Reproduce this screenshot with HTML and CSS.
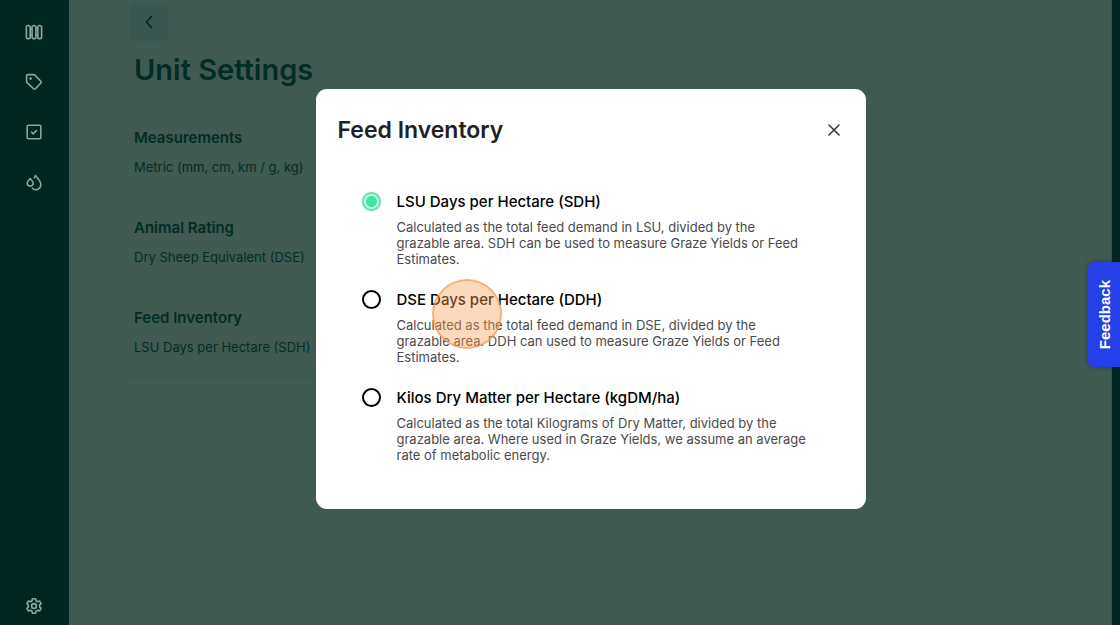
FILE: index.html
```html
<!DOCTYPE html>
<html lang="en">
<head>
<meta charset="utf-8">
<meta name="viewport" content="width=device-width, initial-scale=1">
<title>Unit Settings</title>
<link rel="stylesheet" href="styles.css">
</head>
<body>
<div class="app">
  <nav class="sidebar" aria-label="Main">
    <a class="nav-link" href="#paddocks" aria-label="Paddocks">
      <svg class="icon" viewBox="0 0 18 18"><path d="M1.4 3.4 3.3 2.4 5.2 3.4V14.6Q5.2 15.6 4.2 15.6H2.4Q1.4 15.6 1.4 14.6ZM7.1 3.4 9 2.4 10.9 3.4V14.6Q10.9 15.6 9.9 15.6H8.1Q7.1 15.6 7.1 14.6ZM12.8 3.4 14.7 2.4 16.6 3.4V14.6Q16.6 15.6 15.6 15.6H13.8Q12.8 15.6 12.8 14.6ZM5.2 5.8H7.1M5.2 12.2H7.1M10.9 5.8H12.8M10.9 12.2H12.8"/></svg>
    </a>
    <a class="nav-link" href="#tags" aria-label="Tags">
      <svg class="icon" viewBox="0 0 18 18"><path d="M1.6 2.8Q1.6 1.6 2.8 1.6H8.6Q9.3 1.6 9.8 2.1L15.9 8.2Q16.8 9.1 15.9 10L10.4 15.8Q9.5 16.7 8.6 15.8L2.1 9.6Q1.6 9.1 1.6 8.4Z"/><circle class="fill" cx="5.6" cy="5.6" r="1.3"/></svg>
    </a>
    <a class="nav-link" href="#tasks" aria-label="Tasks">
      <svg class="icon" viewBox="0 0 18 18"><rect x="2.2" y="2.2" width="13.6" height="13.6" rx="1.2"/><path d="M6.6 9.2 8.3 10.8 11.4 7.6"/></svg>
    </a>
    <a class="nav-link" href="#water" aria-label="Water">
      <svg class="icon" viewBox="0 0 18 18"><path d="M5.2 5.5C3.6 7.3 2.2 8.6 2.2 10.1A3 3 0 0 0 8.2 10.1C8.2 8.6 6.8 7.3 5.2 5.5ZM9.3 4.8 10.5 2.7C13 5.8 15.8 8.3 15.8 11.2A5 5 0 0 1 7.3 15.2"/></svg>
    </a>
    <a class="nav-link nav-link-last" href="#settings" aria-label="Settings">
      <svg class="icon" viewBox="0 0 18 18"><path d="M7.5 1.7H10.5L11 3.8 12.5 4.7 14.6 4 16.1 6.6 14.6 8.1V9.9L16.1 11.4 14.6 14 12.5 13.3 11 14.2 10.5 16.3H7.5L7 14.2 5.5 13.3 3.4 14 1.9 11.4 3.4 9.9V8.1L1.9 6.6 3.4 4 5.5 4.7 7 3.8Z"/><circle cx="9" cy="9" r="2.4"/></svg>
    </a>
  </nav>

  <main class="page">
    <button class="back" type="button" aria-label="Back">
      <svg class="back-icon" viewBox="0 0 16 16"><path d="M10.5 2.5 5.5 8 10.5 13.5"/></svg>
    </button>
    <h1 class="page-title">Unit Settings</h1>
    <section class="setting">
      <h2 class="setting-name">Measurements</h2>
      <p class="setting-value">Metric (mm, cm, km / g, kg)</p>
    </section>
    <section class="setting">
      <h2 class="setting-name">Animal Rating</h2>
      <p class="setting-value">Dry Sheep Equivalent (DSE)</p>
    </section>
    <section class="setting">
      <h2 class="setting-name">Feed Inventory</h2>
      <p class="setting-value">LSU Days per Hectare (SDH)</p>
    </section>
  </main>

  <div class="overlay">
    <form class="dialog" role="dialog" aria-labelledby="dialog-title">
      <header class="dialog-head">
        <h2 class="dialog-title" id="dialog-title">Feed Inventory</h2>
        <button class="close" type="button" aria-label="Close">
          <svg class="close-icon" viewBox="0 0 12 12"><path d="M1 1 11 11M11 1 1 11"/></svg>
        </button>
      </header>
      <div class="options">
        <div class="option">
          <input class="radio" type="radio" name="feed" id="sdh" aria-describedby="sdh-text" checked>
          <div class="option-body">
            <label class="option-name" for="sdh">LSU Days per Hectare (SDH)</label>
            <p class="option-text" id="sdh-text">Calculated as the total feed demand in LSU, divided by the grazable area. SDH can be used to measure Graze Yields or Feed Estimates.</p>
          </div>
        </div>
        <div class="option">
          <input class="radio" type="radio" name="feed" id="ddh" aria-describedby="ddh-text">
          <div class="option-body">
            <label class="option-name" for="ddh">DSE Days per Hectare (DDH)</label>
            <p class="option-text" id="ddh-text">Calculated as the total feed demand in DSE, divided by the grazable area. DDH can used to measure Graze Yields or Feed Estimates.</p>
            <span class="pointer" aria-hidden="true"></span>
          </div>
        </div>
        <div class="option">
          <input class="radio" type="radio" name="feed" id="kgdm" aria-describedby="kgdm-text">
          <div class="option-body">
            <label class="option-name" for="kgdm">Kilos Dry Matter per Hectare (kgDM/ha)</label>
            <p class="option-text" id="kgdm-text">Calculated as the total Kilograms of Dry Matter, divided by the grazable area. Where used in Graze Yields, we assume an average rate of metabolic energy.</p>
          </div>
        </div>
      </div>
    </form>
  </div>
  <button class="feedback" type="button">Feedback</button>
</div>
</body>
</html>
```
FILE: styles.css
```css
* {
  box-sizing: border-box;
}

body {
  margin: 0;
  font-family: Inter, "Liberation Sans", sans-serif;
  background: #00271f;
  color: #002e25;
}

h1, h2, p {
  margin: 0;
}

button {
  padding: 0;
  border: 0;
  font-family: inherit;
  cursor: pointer;
}

svg {
  display: block;
  fill: none;
  stroke: currentColor;
  stroke-linecap: round;
  stroke-linejoin: round;
}

.app {
  position: relative;
  display: grid;
  grid-template-columns: 69px 1fr;
  min-height: 100vh;
  padding-right: 8px;
}

.sidebar {
  display: flex;
  flex-direction: column;
  align-items: center;
  gap: 32px;
  padding: 23px 1px 10px 0;
  color: #8ba69e;
}

.nav-link {
  color: inherit;
}

.nav-link-last {
  margin-top: auto;
}

.icon {
  width: 18px;
  height: 18px;
  stroke-width: 1.6;
}

.icon .fill {
  fill: currentColor;
  stroke: none;
}

.page {
  padding: 3px 52px 24px;
  background: #405a52;
  border-right: 1px solid #365149;
}

.back {
  display: grid;
  place-items: center;
  width: 38px;
  height: 38px;
  margin-left: 9px;
  border-radius: 6px;
  background: #395650;
  color: #00271f;
}

.back-icon {
  width: 16px;
  height: 16px;
  stroke-width: 1.6;
}

.page-title {
  padding: 11px 13px;
  margin-bottom: 8px;
  font-size: 29px;
  line-height: 36px;
  font-weight: 600;
}

.setting {
  display: grid;
  gap: 10px;
  max-width: 560px;
  padding: 21px 13px 20px;
  border-bottom: 1px solid #3b564f;
}

.setting-name {
  font-size: 15px;
  line-height: 20px;
  font-weight: 600;
}

.setting-value {
  font-size: 13px;
  line-height: 18px;
}

.overlay {
  position: absolute;
  inset: 0 8px 28px 69px;
  display: grid;
  place-items: center;
}

.dialog {
  width: 100%;
  max-width: 550px;
  padding: 23px 22px 46px;
  border-radius: 11px;
  background: #fff;
  color: #000;
}

.dialog-head {
  display: flex;
  align-items: center;
  justify-content: space-between;
}

.dialog-title {
  font-size: 23px;
  line-height: 36px;
  font-weight: 600;
  color: #222;
}

.close {
  padding: 4px;
  background: none;
  color: #333;
}

.close-icon {
  width: 12px;
  height: 12px;
  stroke-width: 1.5;
}

.options {
  display: grid;
  gap: 22px;
  padding: 43px 34px 0 24px;
}

.option {
  display: flex;
  gap: 16px;
}

.radio {
  appearance: none;
  flex: none;
  width: 19px;
  height: 19px;
  margin: 1px 0 0;
  border: 2px solid #000;
  border-radius: 50%;
  background: #fff;
}

.radio:checked {
  border-color: #6fdcb2;
  background: radial-gradient(circle, #3de6a5 5px, #c8f7e3 6px);
  box-shadow: 0 0 2px #8cecc8;
}

.option-body {
  position: relative;
}

.option-name {
  display: block;
  font-size: 15px;
  line-height: 22px;
  font-weight: 500;
}

.option-text {
  margin-top: 6px;
  font-size: 13px;
  line-height: 16px;
  color: #4a4a4a;
}

.pointer {
  position: absolute;
  top: -10px;
  left: 35px;
  width: 70px;
  height: 70px;
  border: 2px solid rgba(242, 153, 74, 0.6);
  border-radius: 50%;
  background: rgba(250, 160, 85, 0.4);
  pointer-events: none;
}

.feedback {
  position: absolute;
  top: 262px;
  right: 0;
  width: 32px;
  height: 105px;
  border-radius: 6px 0 0 6px;
  background: #2540e8;
  box-shadow: 0 0 6px rgba(0, 0, 0, 0.3);
  color: #fff;
  font-family: "Liberation Sans", sans-serif;
  font-size: 15px;
  font-weight: 700;
  writing-mode: sideways-lr;
}
```
